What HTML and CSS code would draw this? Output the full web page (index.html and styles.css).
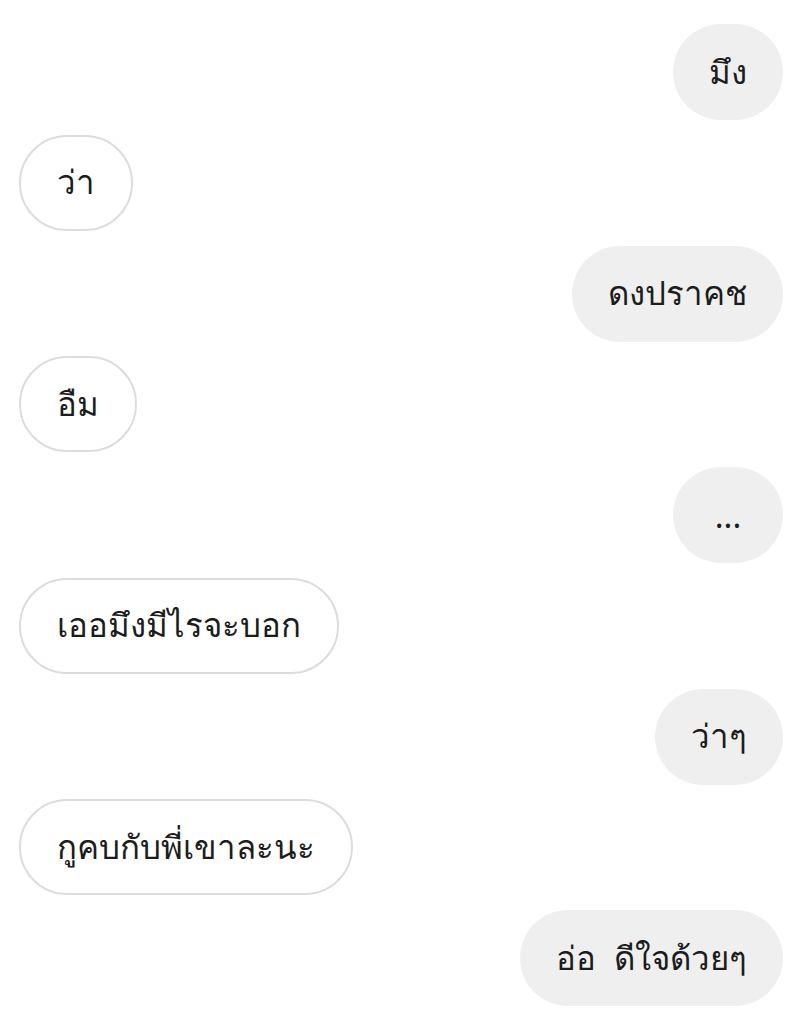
FILE: index.html
```html
<!DOCTYPE html>
<html lang="th">
<head>
  <meta charset="UTF-8">
  <meta name="viewport" content="width=device-width, initial-scale=1.0">
  <title>Chat</title>
  <link rel="stylesheet" href="styles.css">
</head>
<body>
  <div class="chat">
    <div class="msg msg-out">มึง</div>
    <div class="msg msg-in">ว่า</div>
    <div class="msg msg-out">ดงปราคช</div>
    <div class="msg msg-in">อืม</div>
    <div class="msg msg-out">...</div>
    <div class="msg msg-in">เออมึงมีไรจะบอก</div>
    <div class="msg msg-out">ว่าๆ</div>
    <div class="msg msg-in">กูคบกับพี่เขาละนะ</div>
    <div class="msg msg-out">อ่อ ดีใจด้วยๆ</div>
  </div>
</body>
</html>
```

FILE: styles.css
```css
body {
  font-family: "Noto Sans", "DejaVu Sans", sans-serif;
  background-color: #ffffff;
  margin: 0;
}

.chat {
  display: flex;
  flex-direction: column;
  gap: 14.75px;
  padding: 24px 27px 0 19px;
}

.msg {
  display: flex;
  align-items: center;
  justify-content: center;
  box-sizing: border-box;
  height: 96px;
  min-width: 110px;
  padding: 0 36px;
  border-radius: 48px;
  font-size: 33px;
  word-spacing: 9px;
  color: #1c1c1c;
  white-space: nowrap;
}

.msg-out {
  align-self: flex-end;
  background-color: #efefef;
}

.msg-in {
  align-self: flex-start;
  background-color: #ffffff;
  border: 2px solid #dcdcdc;
}
```
